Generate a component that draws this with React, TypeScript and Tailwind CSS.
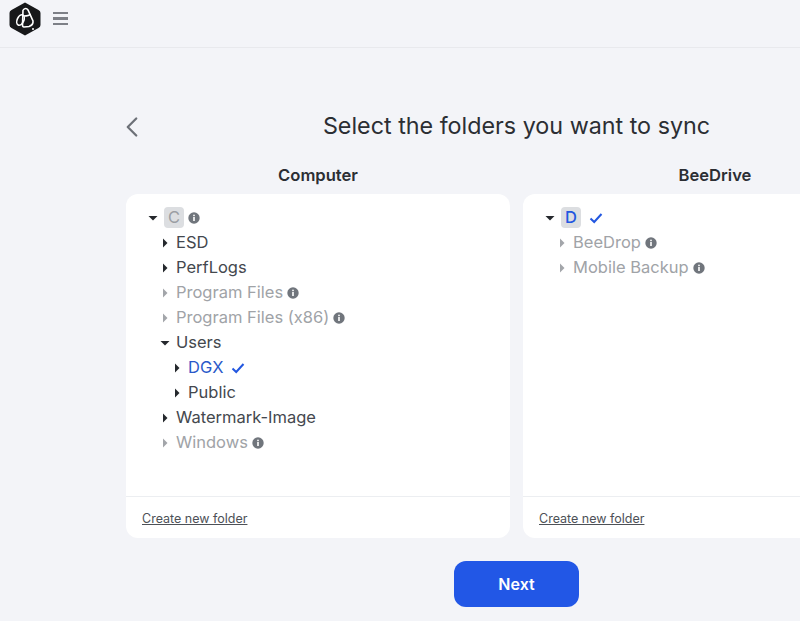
import React from 'react';
import { ChevronLeft } from 'lucide-react';

type Status = 'normal' | 'disabled' | 'selected';

interface TreeRow {
  label: string;
  depth: number;
  open?: boolean;
  status?: Status;
  info?: boolean;
  check?: boolean;
}

const computerRows: TreeRow[] = [
  { label: 'ESD', depth: 1 },
  { label: 'PerfLogs', depth: 1 },
  { label: 'Program Files', depth: 1, status: 'disabled', info: true },
  { label: 'Program Files (x86)', depth: 1, status: 'disabled', info: true },
  { label: 'Users', depth: 1, open: true },
  { label: 'DGX', depth: 2, status: 'selected', check: true },
  { label: 'Public', depth: 2 },
  { label: 'Watermark-Image', depth: 1 },
  { label: 'Windows', depth: 1, status: 'disabled', info: true },
];

const beeDriveRows: TreeRow[] = [
  { label: 'BeeDrop', depth: 1, status: 'disabled', info: true },
  { label: 'Mobile Backup', depth: 1, status: 'disabled', info: true },
];

function Caret({ open, muted }: { open?: boolean; muted?: boolean }) {
  return (
    <svg viewBox="0 0 10 10" className={`w-[10px] h-[10px] shrink-0 ${muted ? 'text-[#a3a6aa]' : 'text-[#25282d]'}`} fill="currentColor">
      {open ? <path d="M0.5 3 L9.5 3 L5 7.5 Z" /> : <path d="M3 0.5 L7.5 5 L3 9.5 Z" />}
    </svg>
  );
}

function InfoDot() {
  return (
    <svg viewBox="0 0 12 12" className="w-3 h-3 ml-1 shrink-0">
      <circle cx="6" cy="6" r="5.7" fill="#70757c" />
      <rect x="5.2" y="5" width="1.6" height="4" fill="#fff" />
      <rect x="5.2" y="2.7" width="1.6" height="1.5" fill="#fff" />
    </svg>
  );
}

function Check() {
  return (
    <svg viewBox="0 0 14 12" className="w-[14px] h-3 ml-2 shrink-0" fill="none" stroke="#2257e0" strokeWidth="2">
      <path d="M1.5 6.5 L5.2 10 L12.5 2" />
    </svg>
  );
}

function Row({ row }: { row: TreeRow }) {
  const color =
    row.status === 'disabled' ? 'text-[#a0a3a7]' : row.status === 'selected' ? 'text-[#2a59c9]' : 'text-[#44484e]';
  return (
    <div className={`flex items-center h-[25px] ${row.depth === 2 ? 'pl-[44px]' : 'pl-[32px]'}`}>
      <Caret open={row.open} muted={row.status === 'disabled'} />
      <span className={`ml-[6px] text-[16.5px] ${color}`}>{row.label}</span>
      {row.info && <InfoDot />}
      {row.check && <Check />}
    </div>
  );
}

function FolderCard({ title, drive, driveBlue, rows }: { title: string; drive: string; driveBlue?: boolean; rows: TreeRow[] }) {
  return (
    <div className="w-[384px] shrink-0">
      <h2 className="text-center text-[16.6px] font-semibold text-[#2b2e33] leading-[24px] mb-[7px]">{title}</h2>
      <div className="bg-white rounded-[12px] h-[344px] flex flex-col">
        <div className="flex-1 pt-[11px] pl-[2px]">
          <div className="flex items-center h-[25px] pl-[20px]">
            <Caret open />
            <span
              className={`ml-[6px] w-5 h-[21px] rounded-[4px] bg-[#dcdee1] flex items-center justify-center text-[16.5px] ${
                driveBlue ? 'text-[#2257e0] font-medium' : 'text-[#9b9ea3]'
              }`}
            >
              {drive}
            </span>
            {driveBlue ? <Check /> : <InfoDot />}
          </div>
          {rows.map(row => (
            <Row key={row.label} row={row} />
          ))}
        </div>
        <div className="h-[42px] border-t border-[#eceef1] pl-4 pt-[3px] flex items-center">
          <a className="text-[12.5px] text-[#4d5157] underline">Create new folder</a>
        </div>
      </div>
    </div>
  );
}

export default function App() {
  return (
    <div className="w-[800px] h-[621px] overflow-hidden bg-[#f3f4f8] font-['Inter',sans-serif] flex flex-col">
      <header className="h-[48px] shrink-0 border-b border-[#e8e9ed] flex items-center pl-[9px] pb-[10px]">
        <svg viewBox="0 0 32 34" className="w-8 h-[34px]">
          <path d="M16 0.5 L29.5 8 Q31.5 9 31.5 11 L31.5 23 Q31.5 25 29.5 26 L16 33.5 L2.5 26 Q0.5 25 0.5 23 L0.5 11 Q0.5 9 2.5 8 Z" fill="#17181a" />
          <g fill="none" stroke="#fff" strokeWidth="1.6">
            <path d="M14 8 Q17 5 19 8 L24 19 Q24.5 23 20 24.5 L15 25 Q13.5 25 13.5 23 L14 8" />
            <path d="M15 14 Q20 14 21.5 12" />
            <ellipse cx="11.5" cy="18" rx="3.3" ry="5.5" transform="rotate(25 11.5 18)" />
          </g>
          <circle cx="24" cy="27" r="1" fill="#fff" />
        </svg>
        <div className="ml-[12px] w-[15px] flex flex-col gap-[3px]">
          <div className="h-[2.5px] bg-[#7d8087]" />
          <div className="h-[2.5px] bg-[#7d8087]" />
          <div className="h-[2.5px] bg-[#7d8087]" />
        </div>
      </header>

      <main className="flex-1 pl-[126px] pt-[60px]">
        <div className="w-[781px]">
          <div className="relative h-[36px] flex items-center justify-center">
            <ChevronLeft size={34} strokeWidth={1.6} className="absolute -left-[11px] top-[2px] text-[#6d7178]" />
            <h1 className="text-[23.3px] font-normal text-[#2b2e33]">Select the folders you want to sync</h1>
          </div>
          <div className="flex gap-[13px] mt-[19px]">
            <FolderCard title="Computer" drive="C" rows={computerRows} />
            <FolderCard title="BeeDrive" drive="D" driveBlue rows={beeDriveRows} />
          </div>
          <div className="flex justify-center mt-[23px]">
            <button className="w-[125px] h-[46px] rounded-[12px] bg-[#2257e6] text-white text-[16px] font-semibold">Next</button>
          </div>
        </div>
      </main>
    </div>
  );
}
